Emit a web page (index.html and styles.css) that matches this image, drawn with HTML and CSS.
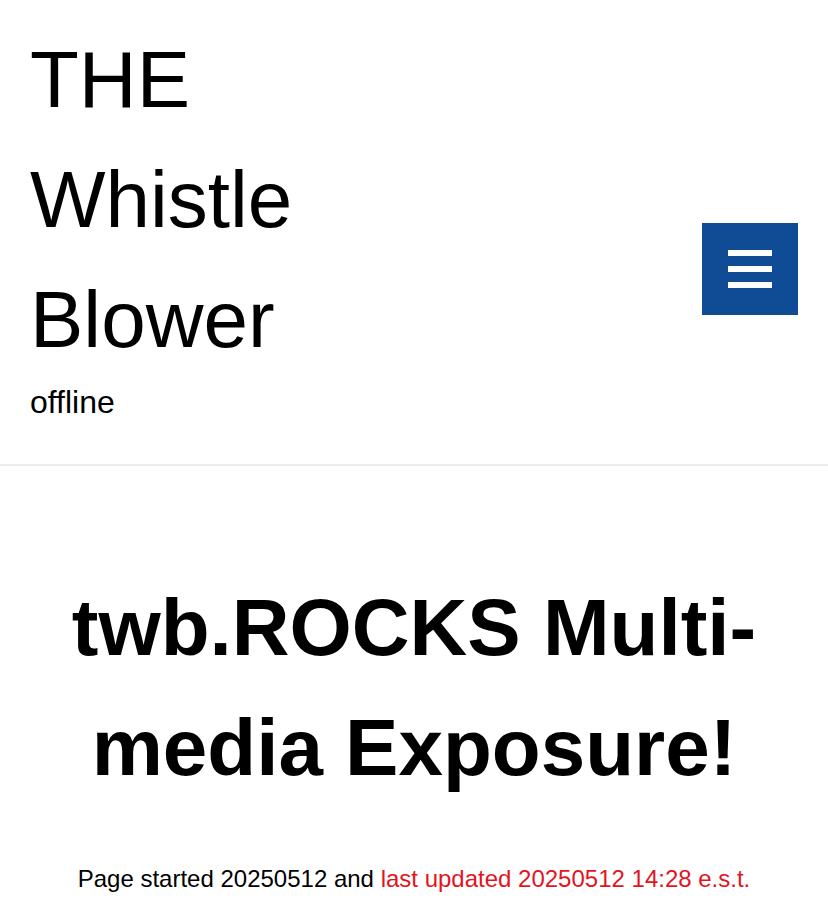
FILE: index.html
```html
<!DOCTYPE html>
<html lang="en">
<head>
<meta charset="utf-8">
<title>THE Whistle Blower</title>
<link rel="stylesheet" href="styles.css">
</head>
<body>
<header class="site-header">
  <div class="branding">
    <div class="site-title">THE Whistle Blower</div>
    <div class="site-desc">offline</div>
  </div>
  <button class="menu-toggle" aria-label="Menu">
    <span class="bar"></span>
    <span class="bar"></span>
    <span class="bar"></span>
  </button>
</header>
<main class="content">
  <h1 class="page-title">twb.ROCKS Multi-media Exposure!</h1>
  <p class="meta">Page started 20250512 and <span class="updated">last updated 20250512 14:28 e.s.t.</span></p>
</main>
</body>
</html>
```

FILE: styles.css
```css
html, body {
  margin: 0;
  padding: 0;
  background: #fff;
  color: #000;
  font-family: "Liberation Sans", Arial, Helvetica, sans-serif;
}

.site-header {
  display: flex;
  justify-content: space-between;
  align-items: flex-start;
  padding: 20px 30px 39px 30px;
  border-bottom: 2px solid #ececec;
}

.branding {
  width: 300px;
}

.site-title {
  font-size: 80px;
  line-height: 120px;
}

.site-desc {
  font-size: 32px;
  line-height: 45px;
}

.menu-toggle {
  margin-top: 203px;
  width: 96px;
  height: 92px;
  background: #0f4c95;
  border: 0;
  padding: 0;
  display: flex;
  flex-direction: column;
  align-items: center;
  justify-content: center;
  gap: 10px;
  cursor: pointer;
}

.bar {
  display: block;
  width: 44px;
  height: 6px;
  background: #fff;
}

.content {
  padding: 102px 30px 0 30px;
  text-align: center;
}

.page-title {
  margin: 0 0 53px 0;
  font-size: 80px;
  line-height: 120px;
  font-weight: bold;
}

.meta {
  margin: 0;
  font-size: 24px;
  line-height: 36px;
}

.updated {
  color: #e3141e;
}
```
